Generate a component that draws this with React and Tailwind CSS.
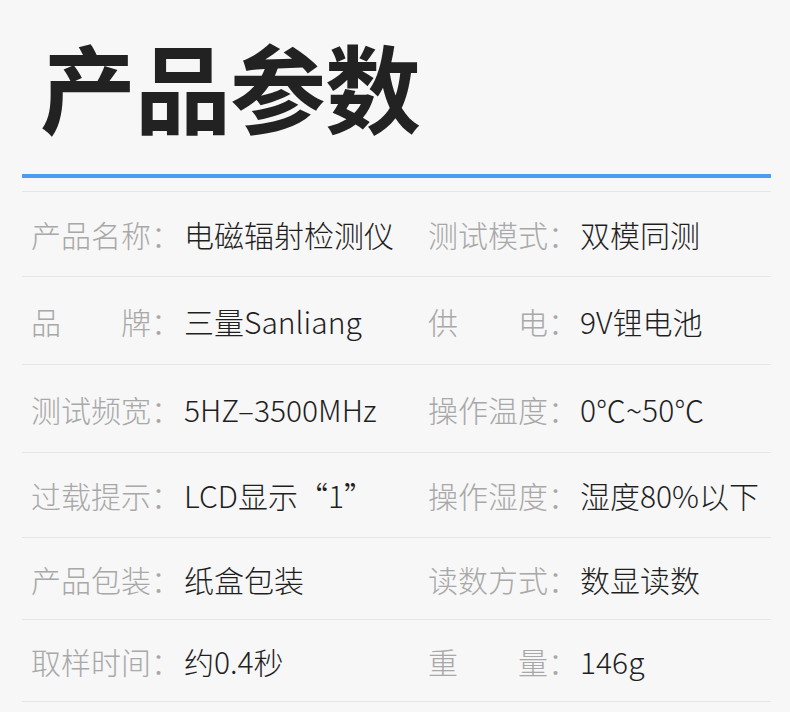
const rows = [
  { h: "h-[85px]", a: ["产品名称：", "电磁辐射检测仪"], b: ["测试模式：", "双模同测"] },
  { h: "h-[88px]", a: ["品\u3000\u3000牌：", "三量Sanliang"], b: ["供\u3000\u3000电：", "9V锂电池"] },
  { h: "h-[88px]", a: ["测试频宽：", "5HZ–3500MHz"], b: ["操作温度：", "0℃~50℃"] },
  { h: "h-[85px]", a: ["过载提示：", "LCD显示“1”"], b: ["操作湿度：", "湿度80%以下"] },
  { h: "h-[82px]", a: ["产品包装：", "纸盒包装"], b: ["读数方式：", "数显读数"] },
  { h: "h-[82px]", a: ["取样时间：", "约0.4秒"], b: ["重\u3000\u3000量：", "146g"] },
];

export default function App() {
  return (
    <div
      className="w-[790px] h-[712px] overflow-hidden bg-[#f7f7f7]"
      style={{ fontFamily: '"Noto Sans CJK SC", "Noto Sans", sans-serif' }}
    >
      <div className="h-[174px] pl-[40px] pt-[37px]">
        <h1 className="text-[96px] leading-none font-bold text-[#222222] tracking-[-1px]">产品参数</h1>
      </div>
      <div className="ml-[22px] w-[749px]">
        <div className="h-[4px] bg-[#4a9df0]" />
        <div className="h-[14px] border-b border-[#e6e6e6]" />
        {rows.map((r, i) => (
          <div
            key={i}
            className={`${r.h} grid grid-cols-[153px_244px_152px_1fr] items-center pl-[9px] border-b border-[#e6e6e6] text-[30px] leading-none font-light whitespace-nowrap`}
          >
            <span className="text-[#a8a8a8]">{r.a[0]}</span>
            <span className="text-[#1f1f1f]">{r.a[1]}</span>
            <span className="text-[#a8a8a8]">{r.b[0]}</span>
            <span className="text-[#1f1f1f]">{r.b[1]}</span>
          </div>
        ))}
      </div>
    </div>
  );
}
